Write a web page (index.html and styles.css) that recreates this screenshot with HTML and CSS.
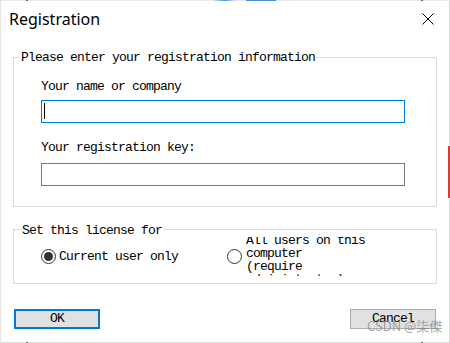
FILE: index.html
```html
<!DOCTYPE html>
<html lang="en">
<head>
<meta charset="utf-8">
<title>Registration</title>
<link rel="stylesheet" href="styles.css">
</head>
<body>
<div class="window">
  <div class="edge top"></div>
  <div class="titlebar">
    <span class="title">Registration</span>
    <svg class="close" width="12" height="12" viewBox="0 0 12 12" aria-label="Close"><path d="M0.5 0.5 L11.5 11.5 M11.5 0.5 L0.5 11.5" stroke="#000" stroke-width="1" fill="none"/></svg>
  </div>
  <fieldset class="group info">
    <legend>Please enter your registration information</legend>
    <label class="field-label first" for="name">Your name or company</label>
    <input id="name" class="field active" type="text">
    <label class="field-label second" for="key">Your registration key:</label>
    <input id="key" class="field" type="text">
  </fieldset>
  <fieldset class="group license">
    <legend>Set this license for</legend>
    <div class="options">
      <label class="option"><input type="radio" name="scope" checked><span>Current user only</span></label>
      <label class="option all"><input type="radio" name="scope"><span class="multi"><span class="lines">All users on this<br>computer<br>(require<br>administrator)</span></span></label>
    </div>
  </fieldset>
  <div class="buttons">
    <button class="btn default" type="button">OK</button>
    <button class="btn" type="button">Cancel</button>
  </div>
  <div class="edge bottom"></div>
  <div class="watermark">CSDN @柒傑</div>
  <div class="redmark"></div>
</div>
</body>
</html>
```
FILE: styles.css
```css
* { box-sizing: border-box; }
html, body { margin: 0; padding: 0; background: #fff; }
body { width: 450px; height: 343px; overflow: hidden; }

.window {
  position: relative;
  width: 450px;
  height: 343px;
  display: flex;
  flex-direction: column;
  background: #fff;
  border-left: 1px solid #e6e6e6;
  border-right: 1px solid #dadada;
  font-family: "Liberation Mono", "DejaVu Sans Mono", monospace;
  font-size: 13px;
  letter-spacing: -0.8px;
  color: #000;
}

.edge { height: 1px; flex: none; }
.edge.top {
  background: linear-gradient(to right,
    #e9e9e9 0 25px, #6a6a6a 25px 27px, #e9e9e9 27px 213px,
    #c9dcf0 213px, #4a8fd8 224px, #d8e6f5 234px, #e9e9e9 236px 245px,
    #4a8fd8 245px 275px, #e9e9e9 275px 420px, #6a6a6a 420px 422px, #e9e9e9 422px);
}
.edge.bottom {
  margin-top: auto;
  background: linear-gradient(to right,
    #e3e3e3 0 25px, #6a6a6a 25px 27px, #e3e3e3 27px 420px, #6a6a6a 420px 422px, #e3e3e3 422px);
}

.titlebar {
  height: 48px;
  flex: none;
  display: flex;
  justify-content: space-between;
  align-items: flex-start;
  padding: 7px 15px 0 8px;
}
.title {
  font-family: "Noto Sans", "Open Sans", sans-serif;
  font-size: 16px;
  line-height: 22px;
  letter-spacing: 0;
  color: #000;
}
.close { margin-top: 5px; display: block; }

.group {
  margin: 0 12px;
  border: 1px solid #dcdcdc;
  min-width: 0;
}
.group legend {
  padding: 0 1px;
  line-height: 14px;
}

.info { padding: 0 6px 20px; }
.info legend { padding-top: 2px; }
.field-label { display: block; margin-left: 21px; line-height: 14px; }
.field-label.first { margin-top: 15px; }
.field-label.second { margin-top: 18px; }
.field {
  display: block;
  margin: 0 0 0 21px;
  width: 364px;
  height: 23px;
  border: 1px solid #7a7a7a;
  padding: 0 3px;
  background: #fff;
  outline: none;
}
.field.active {
  border-color: #0078d7;
  background: #fff linear-gradient(#000, #000) no-repeat 2px 2px / 1px 16px;
}
.info .field-label.first + .field { margin-top: 6px; }
.info .field-label.second + .field { margin-top: 8px; }

.license { margin-top: 14px; padding: 0 6px 7px 7px; }
.license legend { padding: 3px 1px 0; }
.options {
  margin-top: -2px;
  padding-left: 20px;
  display: flex;
  align-items: center;
  height: 40px;
}
.option {
  display: flex;
  align-items: center;
  gap: 3px;
  line-height: 13px;
}
.option.all { margin-left: 49px; gap: 4px; }
.option input {
  appearance: none;
  -webkit-appearance: none;
  margin: 0;
  width: 15px;
  height: 15px;
  border: 1px solid #333;
  border-radius: 50%;
  background: #fff;
  display: grid;
  place-content: center;
  flex: none;
}
.option input:checked::before {
  content: "";
  width: 9px;
  height: 9px;
  border-radius: 50%;
  background: #333;
}
.multi {
  height: 39px;
  width: 125px;
  overflow: hidden;
  display: block;
  margin-top: 1px;
}
.lines { display: block; margin-top: -3px; }

.buttons {
  margin-top: 25px;
  padding: 0 13px;
  display: flex;
  justify-content: space-between;
}
.btn {
  width: 86px;
  height: 20px;
  padding: 0;
  background: #e1e1e1;
  border: 1px solid #adadad;
  font: inherit;
  letter-spacing: inherit;
  color: #000;
  line-height: 14px;
}
.btn.default { border: 2px solid #0078d7; }

.watermark {
  position: absolute;
  left: 366px;
  top: 317px;
  font-family: "Noto Sans CJK SC", "Noto Sans", sans-serif;
  font-size: 13px;
  line-height: 17px;
  letter-spacing: 0;
  color: rgba(130, 130, 130, 0.75);
}
.redmark {
  position: absolute;
  right: -1px;
  top: 146px;
  width: 2px;
  height: 52px;
  background: #d83b2f;
}
```
